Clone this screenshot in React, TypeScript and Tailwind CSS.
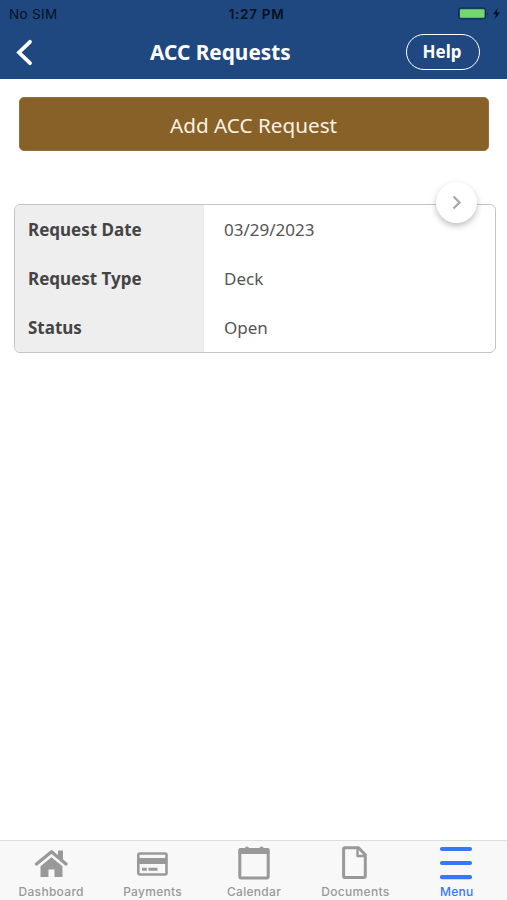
import type { ReactNode } from 'react';

type Row = { label: string; value: string };

const rows: Row[] = [
  { label: 'Request Date', value: '03/29/2023' },
  { label: 'Request Type', value: 'Deck' },
  { label: 'Status', value: 'Open' },
];

function HomeIcon() {
  return (
    <svg width="34" height="30" viewBox="0 0 34 30" fill="currentColor">
      <path d="M6.500 18.300 17.500 9.300l11 9V29h-8v-7.500h-6V29h-8z" />
      <path d="M2.500 16 17.500 3.800 32 16" fill="none" stroke="currentColor" strokeWidth="3.300" strokeLinecap="round" strokeLinejoin="round" />
      <path d="M24 2.500h5V13l-5-4z" />
    </svg>
  );
}

function CardIcon() {
  return (
    <svg className="mt-[2px]" width="32" height="24" viewBox="0 0 32 24" fill="currentColor">
      <rect x="2.300" y="1.500" width="28.200" height="21" rx="1.500" fill="none" stroke="currentColor" strokeWidth="2.600" />
      <path d="M1.500 6h29.500v6H1.500zM6 15.800h4.800v3H6zM12.500 15.800h9v3h-9z" />
    </svg>
  );
}

function CalendarIcon() {
  return (
    <svg width="32" height="34" viewBox="0 0 32 34" fill="currentColor">
      <rect x="1.800" y="3.500" width="28.400" height="28.500" rx="1.500" fill="none" stroke="currentColor" strokeWidth="3" />
      <path d="M2.500 2H7a2 1.600 0 0 1 4 0h10.500a2 1.600 0 0 1 4 0h4q2 0 2 2v4H.500V4q0-2 2-2z" />
    </svg>
  );
}

function DocumentIcon() {
  return (
    <svg width="25" height="33" viewBox="0 0 25 33" fill="none" stroke="currentColor" strokeWidth="3" strokeLinejoin="round">
      <path d="M3 1.700h13.500l6.800 7V30a1.500 1.500 0 0 1-1.500 1.500H3A1.500 1.500 0 0 1 1.600 30V3A1.400 1.400 0 0 1 3 1.700z" />
      <path d="M15.500 2v8h7.500" strokeWidth="2.400" />
    </svg>
  );
}

function MenuIcon() {
  return (
    <svg width="34" height="34" viewBox="0 0 34 34" stroke="currentColor" strokeWidth="4.200" strokeLinecap="round">
      <path d="M3 3h28M3 17h28M3 31.200h28" />
    </svg>
  );
}

function StatusBar() {
  return (
    <div className="grid h-[27px] grid-cols-3 items-center pl-[9px] pr-[6px] font-[Inter,sans-serif] text-[13.500px] text-[#06101f]">
      <span className="pt-[1px] tracking-[0.350px]">No SIM</span>
      <span className="pl-[3px] pt-[1px] text-center font-semibold tracking-[0.700px]">1:27 PM</span>
      <span className="flex justify-end">
        <svg width="44" height="14" viewBox="0 0 44 14">
          <rect x="1.500" y="1" width="27" height="11" rx="2.500" fill="none" stroke="#0b2c48" />
          <rect x="3" y="2.300" width="24.500" height="8.500" rx="1" fill="#75d86c" />
          <path d="M30.500 5q1.500 1.500 0 3z" fill="#06101f" />
          <path d="M40.800 1 36 7.300h3.200L37.500 12l5.500-6.400h-3.400z" fill="#06101f" />
        </svg>
      </span>
    </div>
  );
}

function Tab({ label, icon, active }: { label: string; icon: ReactNode; active?: boolean }) {
  return (
    <button className={`flex flex-1 flex-col items-center ${active ? 'text-[#3478f6]' : 'text-[#999999]'}`}>
      <span className="flex h-[43px] items-center justify-center">{icon}</span>
      <span className="pl-[1px] font-[Inter,sans-serif] text-[12px] font-medium leading-[15px] tracking-[0.300px]">{label}</span>
    </button>
  );
}

export default function App() {
  return (
    <div className="flex h-[900px] w-full flex-col bg-white font-['Noto_Sans',sans-serif]">
      <header className="h-[79px] shrink-0 bg-[#204880]">
        <StatusBar />
        <div className="grid h-[50px] grid-cols-[117px_1fr_117px] items-center text-white">
          <button className="pl-[16px]" aria-label="Back">
            <svg width="17" height="27" viewBox="0 0 17 27" fill="none" stroke="currentColor" strokeWidth="3.800" strokeLinecap="round" strokeLinejoin="miter">
              <path d="M14 2.800 3 13.500 14 24.200" />
            </svg>
          </button>
          <h1 className="whitespace-nowrap pl-[33px] pt-[1px] text-[20.800px] font-bold">ACC Requests</h1>
          <button className="ml-[16px] h-[36px] w-[74px] rounded-full border border-white pr-[2px] text-[17px] font-bold">
            Help
          </button>
        </div>
      </header>

      <main className="flex-1">
        <div className="pl-[19px] pr-[18px] pt-[18px]">
          <button className="h-[54px] w-full rounded-[5px] border border-[#96703c] bg-[#876127] pr-[1px] pt-[3px] text-[20.700px] text-[#fbf1e3]">
            Add ACC Request
          </button>
        </div>

        <section className="relative ml-[14px] mr-[11px] mt-[53px] h-[149px] rounded-[6px] border border-[#c4c4c4]">
          <dl className="h-full overflow-hidden rounded-[5px]">
            {rows.map((row) => (
              <div key={row.label} className="flex h-[49px] text-[17px] leading-[49px]">
                <dt className="w-[189px] bg-[#eeeeee] pl-[13px] font-bold text-[#444444]">{row.label}</dt>
                <dd className="pl-[20px] text-[#555555]">{row.value}</dd>
              </div>
            ))}
          </dl>
          <button
            className="absolute -top-[23px] right-[18px] flex h-[41px] w-[41px] items-center justify-center rounded-full bg-white shadow-[0_3px_6px_rgba(0,0,0,0.250)]"
            aria-label="Open request"
          >
            <svg width="10" height="15" viewBox="0 0 10 15" fill="none" stroke="#aaaaaa" strokeWidth="2.400">
              <path d="m1.500 1.500 6 6-6 6" />
            </svg>
          </button>
        </section>
      </main>

      <nav className="flex h-[60px] shrink-0 border-t border-[#dedede] bg-[#f8f8f8]">
        <Tab label="Dashboard" icon={<HomeIcon />} />
        <Tab label="Payments" icon={<CardIcon />} />
        <Tab label="Calendar" icon={<CalendarIcon />} />
        <Tab label="Documents" icon={<DocumentIcon />} />
        <Tab label="Menu" icon={<MenuIcon />} active />
      </nav>
    </div>
  );
}
